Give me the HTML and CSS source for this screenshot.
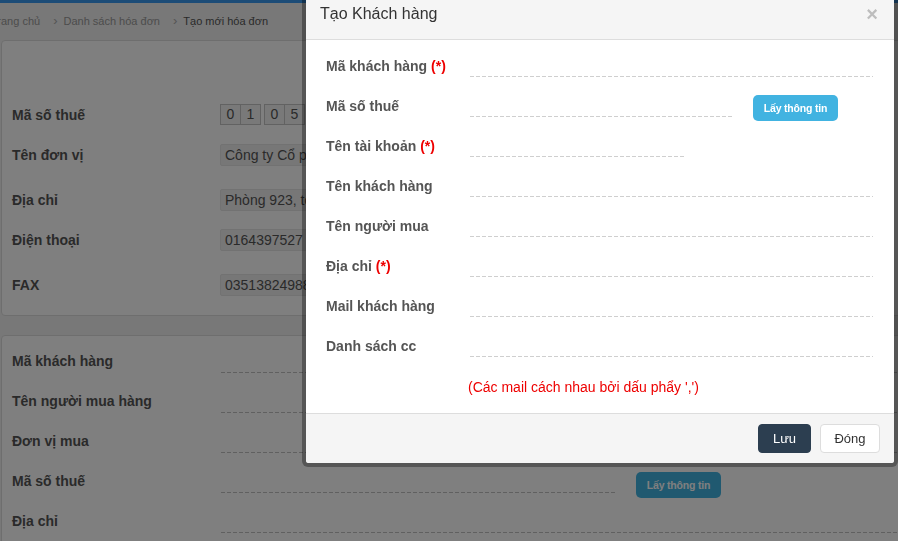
FILE: index.html
```html
<!DOCTYPE html>
<html lang="vi">
<head>
<meta charset="utf-8">
<title>Tạo Khách hàng</title>
<link rel="stylesheet" href="styles.css">
</head>
<body>
<div class="page">
  <div class="topbar"></div>
  <div class="crumbs">
    <span class="crumb">Trang chủ</span><span class="sep">›</span>
    <span class="crumb">Danh sách hóa đơn</span><span class="sep">›</span>
    <span class="crumb current">Tạo mới hóa đơn</span>
  </div>

  <div class="panel seller">
    <div class="prow">
      <div class="plabel">Mã số thuế</div>
      <div class="digits"><span>0</span><span>1</span><span>0</span><span>5</span></div>
    </div>
    <div class="prow">
      <div class="plabel">Tên đơn vị</div>
      <div class="pbox">Công ty Cổ phần</div>
    </div>
    <div class="prow spaced">
      <div class="plabel">Địa chỉ</div>
      <div class="pbox">Phòng 923, tòa</div>
    </div>
    <div class="prow">
      <div class="plabel">Điện thoại</div>
      <div class="pbox">0164397527</div>
    </div>
    <div class="prow spaced">
      <div class="plabel">FAX</div>
      <div class="pbox">03513824988</div>
    </div>
  </div>

  <div class="panel buyer">
    <div class="brow"><div class="blabel">Mã khách hàng</div><div class="bctl"><div class="bline"></div></div></div>
    <div class="brow"><div class="blabel">Tên người mua hàng</div><div class="bctl"><div class="bline"></div></div></div>
    <div class="brow"><div class="blabel">Đơn vị mua</div><div class="bctl"><div class="bline"></div></div></div>
    <div class="brow"><div class="blabel">Mã số thuế</div><div class="bctl"><div class="bline btax"></div><span class="btn-info dim">Lấy thông tin</span></div></div>
    <div class="brow"><div class="blabel">Địa chỉ</div><div class="bctl"><div class="bline"></div></div></div>
  </div>
</div>

<div class="backdrop"></div>

<div class="modal">
  <div class="mhead">
    <h4 class="mtitle">Tạo Khách hàng</h4>
    <span class="close">×</span>
  </div>
  <div class="mbody">
    <div class="frow"><label class="flabel">Mã khách hàng <span class="req">(*)</span></label><div class="fctl"><input class="line" type="text"></div></div>
    <div class="frow"><label class="flabel">Mã số thuế</label><div class="fctl"><input class="line tax" type="text"><button class="btn-info" type="button">Lấy thông tin</button></div></div>
    <div class="frow"><label class="flabel">Tên tài khoản <span class="req">(*)</span></label><div class="fctl"><input class="line acct" type="text"></div></div>
    <div class="frow"><label class="flabel">Tên khách hàng</label><div class="fctl"><input class="line" type="text"></div></div>
    <div class="frow"><label class="flabel">Tên người mua</label><div class="fctl"><input class="line" type="text"></div></div>
    <div class="frow"><label class="flabel">Địa chỉ <span class="req">(*)</span></label><div class="fctl"><input class="line" type="text"></div></div>
    <div class="frow"><label class="flabel">Mail khách hàng</label><div class="fctl"><input class="line" type="text"></div></div>
    <div class="frow"><label class="flabel">Danh sách cc</label><div class="fctl"><input class="line" type="text"></div></div>
    <div class="hint">(Các mail cách nhau bởi dấu phẩy ',')</div>
  </div>
  <div class="mfoot">
    <button class="btn btn-save" type="button">Lưu</button>
    <button class="btn btn-close" type="button">Đóng</button>
  </div>
</div>
</body>
</html>
```

FILE: styles.css
```css
* { box-sizing: border-box; }
html, body { margin: 0; padding: 0; }
body {
  font-family: "Liberation Sans", Arial, sans-serif;
  background: #f0f0f0;
  width: 898px;
  height: 541px;
  overflow: hidden;
}
.page { width: 1000px; }

.topbar { height: 3px; background: #3899ee; }

.crumbs {
  height: 35px;
  display: flex;
  align-items: center;
  margin-left: -9px;
  font-size: 11px;
  color: #999;
  white-space: nowrap;
}
.sep { margin: 0 6px 0 13px; color: #aaa; font-size: 13px; }
.current { color: #555; }

.panel {
  background: #fff;
  border: 1px solid #ddd;
  border-radius: 4px;
  margin-left: 1px;
}
.seller { margin-top: 2px; padding: 54px 10px 10px; }
.buyer { margin-top: 19px; padding: 5px 10px 20px; }

.prow { display: flex; align-items: center; height: 40px; }
.prow.spaced { margin-top: 5px; }
.plabel { width: 208px; font-weight: bold; font-size: 14px; color: #555; }
.pbox {
  width: 240px;
  height: 22px;
  line-height: 20px;
  padding: 0 0 0 4px;
  background: #eee;
  border: 1px solid #e4e4e4;
  border-radius: 2px;
  font-size: 14px;
  color: #555;
  white-space: nowrap;
  overflow: hidden;
}
.digits { display: flex; margin-top: -2px; }
.digits span {
  width: 21px;
  height: 21px;
  border: 1px solid #c4c4c4;
  margin-left: -1px;
  text-align: center;
  line-height: 19px;
  font-size: 14px;
  color: #555;
  background: #f2f2f2;
}
.digits span:first-child { margin-left: 0; }
.digits span:nth-child(2n) { margin-right: 4px; }

.brow { display: flex; height: 40px; }
.blabel {
  width: 209px;
  padding-top: 10px;
  line-height: 20px;
  font-weight: bold;
  font-size: 14px;
  color: #555;
}
.bctl { flex: 1; display: flex; gap: 21px; align-items: flex-start; }
.bline {
  flex: 1;
  height: 32px;
  background: linear-gradient(to right, #c0c0c0 4px, transparent 4px) left bottom / 6px 1px repeat-x;
}
.bline.btax { flex: 0 0 394px; }

.backdrop {
  position: fixed;
  inset: 0;
  background: rgba(0, 0, 0, 0.5);
}

.modal {
  position: fixed;
  top: 0;
  left: 302px;
  width: 596px;
  background: #fff;
  background-clip: padding-box;
  border: 4px solid rgba(0, 0, 0, 0.32);
  border-top: 0;
  border-radius: 0 0 6px 6px;
}
.mhead {
  height: 40px;
  background: #f5f5f5;
  border-bottom: 1px solid #ddd;
  display: flex;
  justify-content: space-between;
  align-items: flex-start;
  padding: 4px 16px 0 14px;
}
.mtitle {
  margin: 0;
  font-size: 16px;
  line-height: 20px;
  font-weight: normal;
  color: #333;
}
.close {
  font-size: 20px;
  line-height: 20px;
  font-weight: bold;
  color: #bdbdbd;
}

.mbody { padding: 5px 21px 16px 20px; }
.frow { display: flex; height: 40px; }
.flabel {
  width: 144px;
  padding-top: 11px;
  line-height: 20px;
  font-size: 14px;
  font-weight: bold;
  color: #555;
  white-space: nowrap;
}
.req { color: #e00; }
.fctl { flex: 1; display: flex; gap: 21px; align-items: flex-start; }
.line {
  flex: 1;
  min-width: 0;
  height: 32px;
  margin: 0;
  padding: 0;
  border: 0;
  outline: 0;
  font: inherit;
  background: linear-gradient(to right, #cfcfcf 4px, transparent 4px) left bottom / 6px 1px repeat-x;
}
.line.tax { flex: 0 0 262px; }
.line.acct { flex: 0 0 214px; }

.btn-info {
  margin-top: 10px;
  width: 85px;
  height: 26px;
  border: 0;
  border-radius: 5px;
  background: #41b3e1;
  color: #fff;
  font-family: "Liberation Sans", Arial, sans-serif;
  font-weight: bold;
  font-size: 10.5px;
  letter-spacing: -0.2px;
  padding: 0;
  display: inline-flex;
  align-items: center;
  justify-content: center;
}
.btn-info.dim { margin-top: 11px; }

.hint {
  margin-top: 12px;
  padding-left: 142px;
  line-height: 20px;
  font-size: 14px;
  color: #e00;
}

.mfoot {
  border-top: 1px solid #ddd;
  background: #f5f5f5;
  padding: 10px 14px 10px;
  display: flex;
  justify-content: flex-end;
  gap: 9px;
  border-radius: 0 0 4px 4px;
}
.btn {
  height: 29px;
  padding: 0;
  border-radius: 4px;
  font-family: "Liberation Sans", Arial, sans-serif;
  font-size: 13px;
}
.btn-save { background: #2c3e50; border: 1px solid #2c3e50; color: #fff; width: 53px; }
.btn-close { background: #fff; border: 1px solid #ddd; color: #333; width: 60px; }
```
